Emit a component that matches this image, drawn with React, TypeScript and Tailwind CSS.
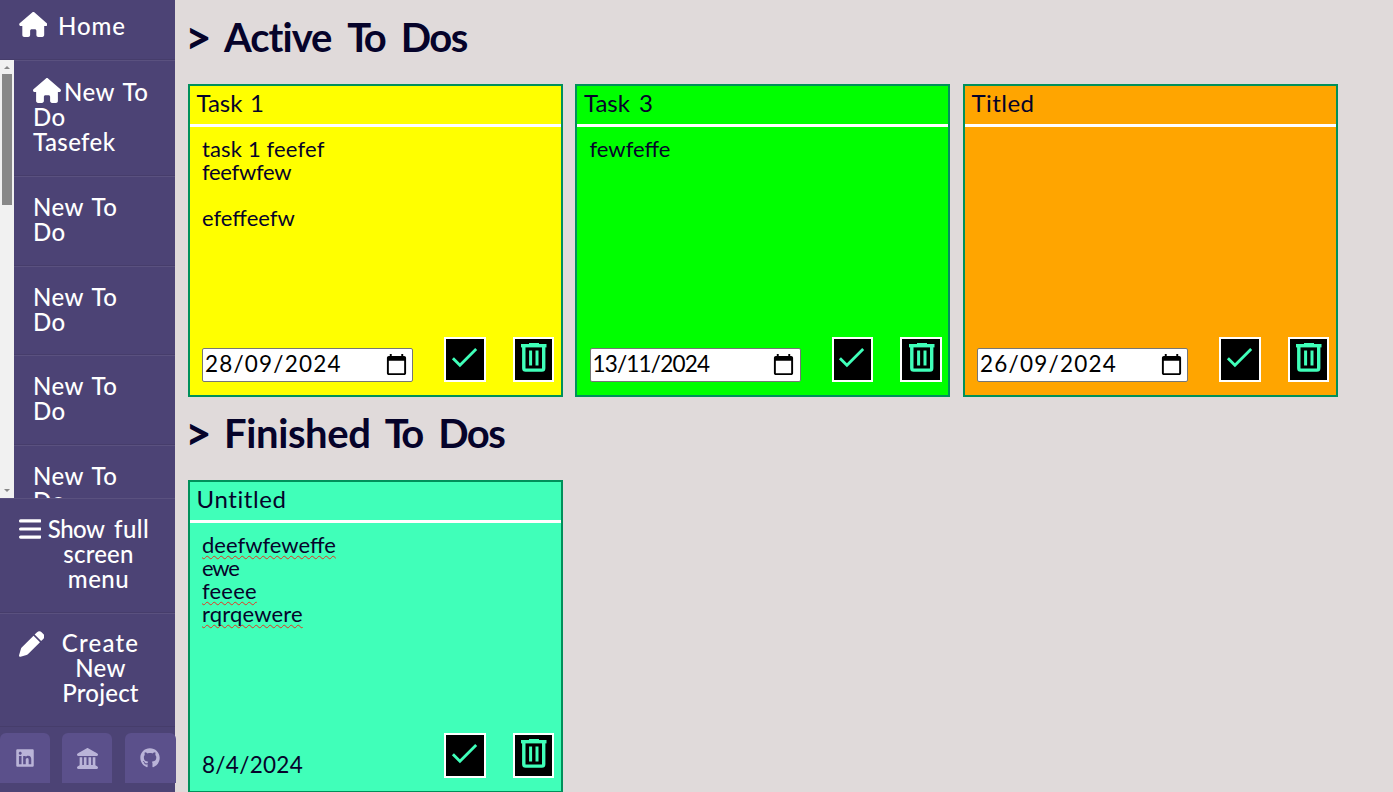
import type { ReactNode } from "react";
import { FaBars, FaGithub, FaHouse, FaLandmark, FaLinkedin, FaPen } from "react-icons/fa6";
import { MdCalendarToday, MdCheck } from "react-icons/md";

function TrashIcon() {
  return (
    <svg width="26" height="29" viewBox="0 0 26 29" fill="none">
      <path d="M8 0h10v2H8z" fill="#40ffb9" />
      <path d="M0 1h25.5v3.4H0z" fill="#40ffb9" />
      <path d="M2.8 3.5v21.8a1.8 1.8 0 0 0 1.8 1.8h16.3a1.8 1.8 0 0 0 1.8-1.8V3.5" stroke="#40ffb9" strokeWidth="3.4" />
      <path d="M9.6 7.6v15M16 7.6v15" stroke="#40ffb9" strokeWidth="3" />
    </svg>
  );
}

function MenuRow({ children, className }: { children: ReactNode; className: string }) {
  return (
    <div className={`flex shrink-0 border-t border-t-white/8 border-b border-b-black/8 ${className}`}>
      {children}
    </div>
  );
}

function NewToDo({ className }: { className: string }) {
  return (
    <MenuRow className={`pl-[19px] pt-[17px] ${className}`}>
      <div className="tracking-[0.4px] [word-spacing:2.5px]">
        New To
        <br />
        Do
      </div>
    </MenuRow>
  );
}

function Sidebar() {
  return (
    <nav className="flex h-full w-[175px] shrink-0 flex-col bg-[#4c4375] text-[24px] font-medium leading-[25px] text-white">
      <div className="flex h-[60px] shrink-0 border-b border-black/8 pl-[18.5px] pt-3">
        <FaHouse className="h-[25px] w-[28.5px] shrink-0" />
        <span className="ml-[11px] pt-px tracking-[0.9px]">Home</span>
      </div>

      <div className="flex h-[438px] shrink-0 overflow-hidden">
        <div className="flex w-[14px] shrink-0 flex-col items-center bg-[#f1f1f1] py-[6px]">
          <svg width="6" height="3" viewBox="0 0 6 3" fill="#888888">
            <path d="M3 0l3 3H0z" />
          </svg>
          <div className="mt-[5px] h-[131px] w-[10px] bg-[#888888]" />
          <svg className="mt-auto" width="6" height="3" viewBox="0 0 6 3" fill="#888888">
            <path d="M0 0h6L3 3z" />
          </svg>
        </div>
        <div className="flex w-[161px] flex-col">
          <MenuRow className="h-[116px] pl-[19px] pt-[18px]">
            <div className="tracking-[0.4px] [word-spacing:2.5px]">
              <FaHouse className="-mt-px mr-[3px] inline-block h-[25px] w-[28px] align-top" />
              New To
              <br />
              Do
              <br />
              Tasefek
            </div>
          </MenuRow>
          <NewToDo className="h-[90px]" />
          <NewToDo className="h-[89px]" />
          <NewToDo className="h-[90px]" />
          <NewToDo className="h-[89px]" />
        </div>
      </div>

      <MenuRow className="h-[115px] pl-[18.5px] pt-[17px]">
        <FaBars className="h-[26px] w-[22.5px] shrink-0" />
        <div className="ml-[6px] w-[103px] text-center tracking-[0.2px]">
          <span className="tracking-[-0.5px]">Show</span>
          <span className="tracking-[0.46px] [word-spacing:3px]"> full</span>
          <br />
          screen
          <br />
          <span className="tracking-[0.5px]">menu</span>
        </div>
      </MenuRow>
      <MenuRow className="h-[114px] pl-[18.5px] pt-4">
        <FaPen className="mt-px h-[26px] w-[25.5px] shrink-0" />
        <div className="ml-[5px] w-[103px] text-center">
          <span className="tracking-[1.2px]">Create</span>
          <br />
          <span className="tracking-[0.3px]">New</span>
          <br />
          <span className="tracking-[0.2px]">Project</span>
        </div>
      </MenuRow>

      <div className="mt-[6px] flex h-[50px] w-[175.5px] text-[#bab4d8]">
        <a className="flex h-[50px] w-[50px] items-center justify-center rounded-t-[6px] bg-[#5b508b]">
          <FaLinkedin className="h-[20px] w-[18px]" />
        </a>
        <a className="ml-[12px] flex h-[50px] w-[50px] items-center justify-center rounded-t-[6px] bg-[#5b508b]">
          <FaLandmark className="h-[21px] w-[21px]" />
        </a>
        <a className="ml-[13px] flex h-[50px] w-[50.5px] items-center justify-center rounded-t-[6px] bg-[#5b508b]">
          <FaGithub className="h-[20px] w-[20px]" />
        </a>
      </div>
    </nav>
  );
}

function DateField({ children, className }: { children: string; className: string }) {
  return (
    <div className="flex h-[34px] w-[211px] items-center rounded-[2px] border border-[#767676] bg-white pl-[2px] pr-[4.5px] text-black">
      <span className={`flex-1 pb-[3px] ${className}`}>{children}</span>
      <MdCalendarToday className="mb-px h-[23px] w-[23px]" />
    </div>
  );
}

function Card({
  color,
  title,
  titleClass,
  date,
  children,
}: {
  color: string;
  title: string;
  titleClass: string;
  date: ReactNode;
  children?: ReactNode;
}) {
  return (
    <article className={`flex h-[313px] w-[375px] shrink-0 flex-col border-2 border-[#00905a] ${color}`}>
      <h2 className={`h-[41px] border-b-[3px] border-white pl-[7px] text-[24px] leading-[33px] ${titleClass}`}>
        {title}
      </h2>
      <div className="flex flex-1 flex-col items-start pl-[12.5px] pt-[10px] text-[22px] leading-[23px]">
        {children}
      </div>
      <div className="mb-[13px] flex h-[45px] items-end pl-[12.5px]">
        <div className="w-[211px] text-[22.5px]">{date}</div>
        <button className="ml-[31.1px] flex h-[45px] w-[41.6px] items-start justify-center border-2 border-white bg-black pr-[1.5px] pt-px">
          <MdCheck className="h-[34.5px] w-[34.5px] shrink-0 text-[#40ffb9]" />
        </button>
        <button className="ml-[27.2px] flex h-[45px] w-[41.2px] items-start justify-center border-2 border-white bg-black pl-[1.5px] pt-[4px]">
          <TrashIcon />
        </button>
      </div>
    </article>
  );
}

function Typo({ children, className = "" }: { children: string; className?: string }) {
  return (
    <p
      className={`underline decoration-[#e8311f] decoration-wavy decoration-[1.4px] underline-offset-[2px] [text-decoration-skip-ink:none] ${className}`}
    >
      {children}
    </p>
  );
}

function Heading({ children, className }: { children: ReactNode; className: string }) {
  return (
    <h1 className={`-ml-[2.5px] whitespace-nowrap text-[40px] font-bold leading-[48px] [word-spacing:6px] ${className}`}>
      <span className="relative top-[2px] text-[46px] leading-none">&gt;</span>
      {children}
      <span className="tracking-[-2.7px]">To</span> <span className="ml-px tracking-[-1.6px]">Dos</span>
    </h1>
  );
}

export default function App() {
  return (
    <div className="flex h-[792px] w-full overflow-hidden bg-[#e0dada] font-[Lato,sans-serif] text-[#06032a]">
      <Sidebar />
      <main className="flex-1 pl-[12.5px]">
        <Heading className="h-[84px] pt-[12px]">
          <span className="ml-[-1px] tracking-[-1px]"> Active</span>{" "}
        </Heading>
        <section className="flex gap-[12.5px]">
          <Card
            color="bg-[#ffff00]"
            title="Task 1"
            titleClass="[word-spacing:1.5px]"
            date={<DateField className="tracking-[1.2px]">28/09/2024</DateField>}
          >
            <p className="tracking-[0.15px]">task 1 feefef</p>
            <p className="tracking-[-0.3px]">feefwfew</p>
            <p className="mt-[23px]">efeffeefw</p>
          </Card>
          <Card
            color="bg-[#00ff00]"
            title="Task 3"
            titleClass="[word-spacing:3px]"
            date={<DateField className="tracking-[-0.8px]">13/11/2024</DateField>}
          >
            <p>fewfeffe</p>
          </Card>
          <Card
            color="bg-[#ffa500]"
            title="Titled"
            titleClass="tracking-[0.44px]"
            date={<DateField className="tracking-[1.24px]">26/09/2024</DateField>}
          />
        </section>
        <Heading className="h-[83px] pt-[11px]">
          <span className="ml-[-3px] tracking-[-0.4px]"> Finished</span>
          <span className="-ml-[1.5px]"> </span>
        </Heading>
        <section className="flex">
          <Card
            color="bg-[#40ffb9]"
            title="Untitled"
            titleClass="tracking-[0.6px]"
            date={<div className="leading-[27px] tracking-[0.3px]">8/4/2024</div>}
          >
            <Typo>deefwfeweffe</Typo>
            <p className="tracking-[-1.2px]">ewe</p>
            <Typo className="tracking-[0.2px]">feeee</Typo>
            <Typo className="tracking-[0.17px]">rqrqewere</Typo>
          </Card>
        </section>
      </main>
    </div>
  );
}
